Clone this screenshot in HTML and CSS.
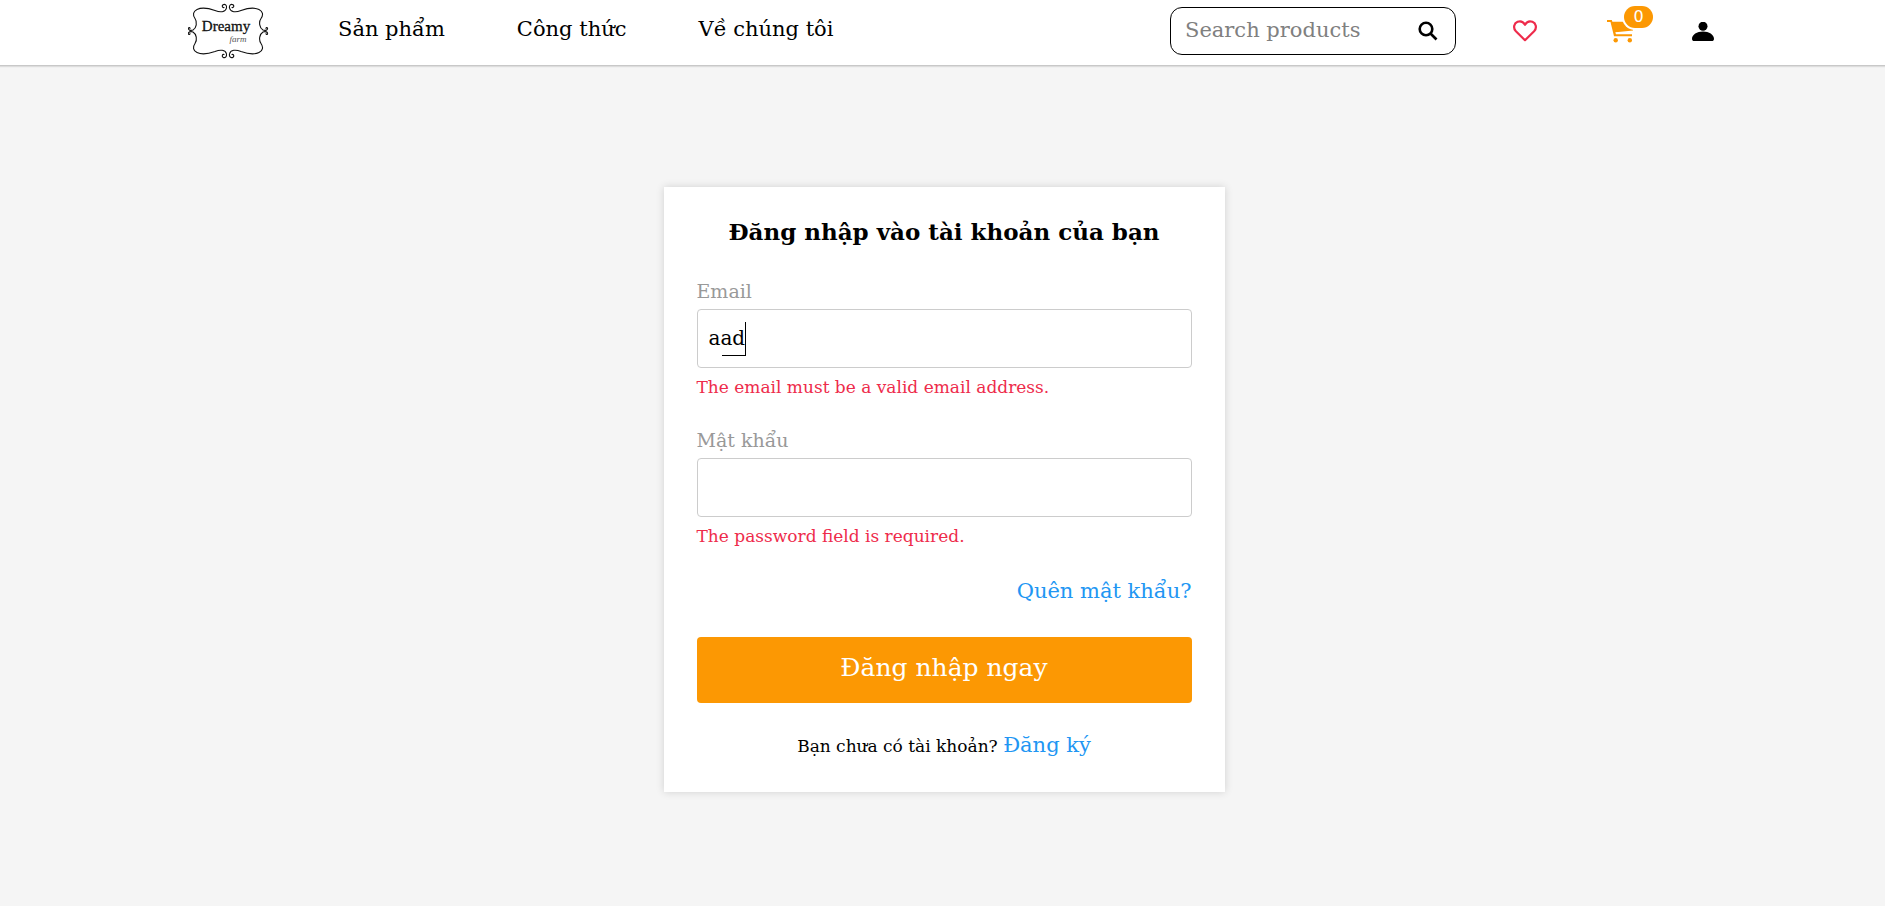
FILE: index.html
```html
<!DOCTYPE html>
<html lang="vi">
<head>
<meta charset="utf-8">
<meta name="viewport" content="width=device-width, initial-scale=1">
<title>Dreamy farm</title>
<link rel="stylesheet" href="styles.css">
</head>
<body>
<header class="header">
  <a class="logo" href="#" aria-label="Dreamy farm">
    <svg viewBox="0 0 82 56" width="82" height="56" fill="none" stroke="#111" stroke-width="1.1" stroke-linecap="round">
      <g id="corner">
        <path d="M37 4.500C35.500 5 34.500 3 36 1.800 38 .5 40 2.500 39.500 5 38.500 9.500 33 9.500 28 7.500 21 5 15 4 10 6.500 6 8.500 5.500 12 8 15.500 10.500 19 9.500 25 6 27 3.500 28 1 27 1.500 25 2 24 3 24.500 3 25.500"/>
      </g>
      <use href="#corner" transform="matrix(-1 0 0 1 82 0)"/>
      <use href="#corner" transform="matrix(1 0 0 -1 0 56)"/>
      <use href="#corner" transform="matrix(-1 0 0 -1 82 56)"/>
      <text class="logo-name" x="39" y="28" text-anchor="middle">Dreamy</text>
      <text class="logo-sub" x="51" y="39" text-anchor="middle">farm</text>
    </svg>
  </a>
  <nav class="nav">
    <a href="#">Sản phẩm</a>
    <a href="#">Công thức</a>
    <a href="#">Về chúng tôi</a>
  </nav>
  <form class="search">
    <input type="search" placeholder="Search products" aria-label="Search products">
    <button type="button" aria-label="Search">
      <svg viewBox="0 0 20 20" width="20" height="20" fill="none" stroke="#000" stroke-width="2.6"><circle cx="8" cy="8" r="6.3"/><path d="M12.5 12.5l6 6"/></svg>
    </button>
  </form>
  <div class="actions">
    <a href="#" aria-label="Wishlist">
      <svg viewBox="0 0 24 22" width="24" height="22" fill="none" stroke="#ee2b4b" stroke-width="2.2" stroke-linejoin="round"><path d="M12 20.2L2.9 11.3C-.2 8 1 3.2 4.600 1.800 7.600 .7 10.400 2 12 4.800 13.600 2 16.400 .7 19.400 1.800 23 3.200 24.200 8 21.100 11.300Z"/></svg>
    </a>
    <a class="cart" href="#" aria-label="Cart">
      <svg viewBox="0 0 26 23" width="26" height="23" fill="#fc9803"><path d="M0 0h4.800l.6 1.700H26V10.500L8.800 12.200 9 14.200H25v2H7L3.500 2H0z"/><circle cx="8.700" cy="20.200" r="2.200"/><circle cx="22.800" cy="20.200" r="2.200"/><path d="M8.300 12.900H25" stroke="#fff" stroke-width=".9"/></svg>
      <span class="badge">0</span>
    </a>
    <a href="#" aria-label="Account">
      <svg viewBox="0 0 22 19" width="22" height="19"><circle cx="11" cy="4.200" r="4.500"/><path d="M11 9.500c6 0 11 3.200 11 7.200 0 1.500-.8 2.300-2.300 2.300H2.300C.8 19 0 18.200 0 16.700c0-4 5-7.200 11-7.200z"/></svg>
    </a>
  </div>
</header>
<main class="main">
  <form class="card" novalidate>
    <h1>Đăng nhập vào tài khoản của bạn</h1>
    <div class="field">
      <label for="email">Email</label>
      <div class="control">
        <input id="email" type="text" value="aad">
        <span class="composing"></span>
      </div>
      <p class="error">The email must be a valid email address.</p>
    </div>
    <div class="field">
      <label for="password">Mật khẩu</label>
      <div class="control"><input id="password" type="password"></div>
      <p class="error">The password field is required.</p>
    </div>
    <a class="forgot" href="#">Quên mật khẩu?</a>
    <button class="submit" type="button">Đăng nhập ngay</button>
    <p class="signup">Bạn chưa có tài khoản? <a href="#">Đăng ký</a></p>
  </form>
</main>
</body>
</html>
```
FILE: styles.css
```css
* { box-sizing: border-box; }

body {
  margin: 0;
  min-height: 100vh;
  background: #f5f5f5;
  color: #000;
  font: 21px/24px "DejaVu Serif", serif;
}

a { color: inherit; text-decoration: none; }
svg { display: block; }
input, button { font: inherit; }

.header {
  display: flex;
  align-items: center;
  height: 66px;
  padding: 0 171px 0 187px;
  background: #fff;
  border-bottom: 1px solid #c8c8c8;
  box-shadow: 0 1px 1px #ddd;
}
.logo { margin: 0 69px 4px 0; }
.logo-name { font: 15px "Liberation Serif", serif; fill: #111; stroke: #111; stroke-width: .3px; }
.logo-sub { font: italic 9px "Liberation Serif", serif; fill: #555; stroke: none; }

.nav { display: flex; gap: 72px; padding-bottom: 8px; white-space: nowrap; }

.search {
  display: flex;
  align-items: center;
  width: 286px;
  height: 48px;
  margin: 0 57px 4px auto;
  padding: 0 17px 0 14px;
  border: 1px solid #000;
  border-radius: 12px;
}
.search input {
  flex: 1;
  min-width: 0;
  padding: 0 0 2px;
  border: 0;
  outline: 0;
  background: none;
}
.search input::placeholder { color: #808080; }
.search button { padding: 0; border: 0; background: none; }

.actions { display: flex; align-items: center; gap: 70px; padding-bottom: 3px; }
.actions a:last-child { margin-left: -11px; }
.cart { position: relative; }
.badge {
  position: absolute;
  left: 17px;
  top: -14px;
  width: 29px;
  height: 22px;
  border-radius: 11px;
  background: #fc9803;
  box-shadow: 0 0 0 2px #fff;
  color: #fff;
  font: 16px/21px "DejaVu Sans", sans-serif;
  text-align: center;
}

.main { padding: 121px 0 48px 3px; }
.card {
  display: flex;
  flex-direction: column;
  max-width: 561px;
  margin: 0 auto;
  padding: 31px 33px 34px;
  background: #fff;
  box-shadow: 0 0 8px rgba(0, 0, 0, .15);
}
h1 {
  margin: 0 0 33px;
  font-size: 23px;
  line-height: 28px;
  text-align: center;
}
.field { margin-bottom: 31px; }
.field label { display: block; margin-bottom: 6px; color: #999; font-size: 19px; }
.field + .field { margin-top: -1px; }
.control { position: relative; }
.control input {
  display: block;
  width: 100%;
  height: 59px;
  padding: 0 11px 2px;
  border: 1px solid #ccc;
  border-radius: 4px;
  outline: 0;
  background: #fff;
  font-size: 20px;
}
.composing {
  position: absolute;
  left: 25px;
  top: 13px;
  width: 24px;
  height: 34px;
  border: solid #000;
  border-width: 0 1px 1px 0;
}
.error { margin: 8px 0 0; color: #ee2b4b; font-size: 17px; line-height: 22px; }
.forgot { align-self: flex-end; margin-top: 1px; color: #2196f3; }
.submit {
  height: 66px;
  margin: 34px 0 30px;
  padding: 0 0 4px;
  border: 0;
  border-radius: 4px;
  background: #fc9803;
  color: #fff;
  font-size: 25px;
}
.signup { margin: 0; font-size: 17px; text-align: center; }
.signup a { color: #2196f3; font-size: 21px; }
```
